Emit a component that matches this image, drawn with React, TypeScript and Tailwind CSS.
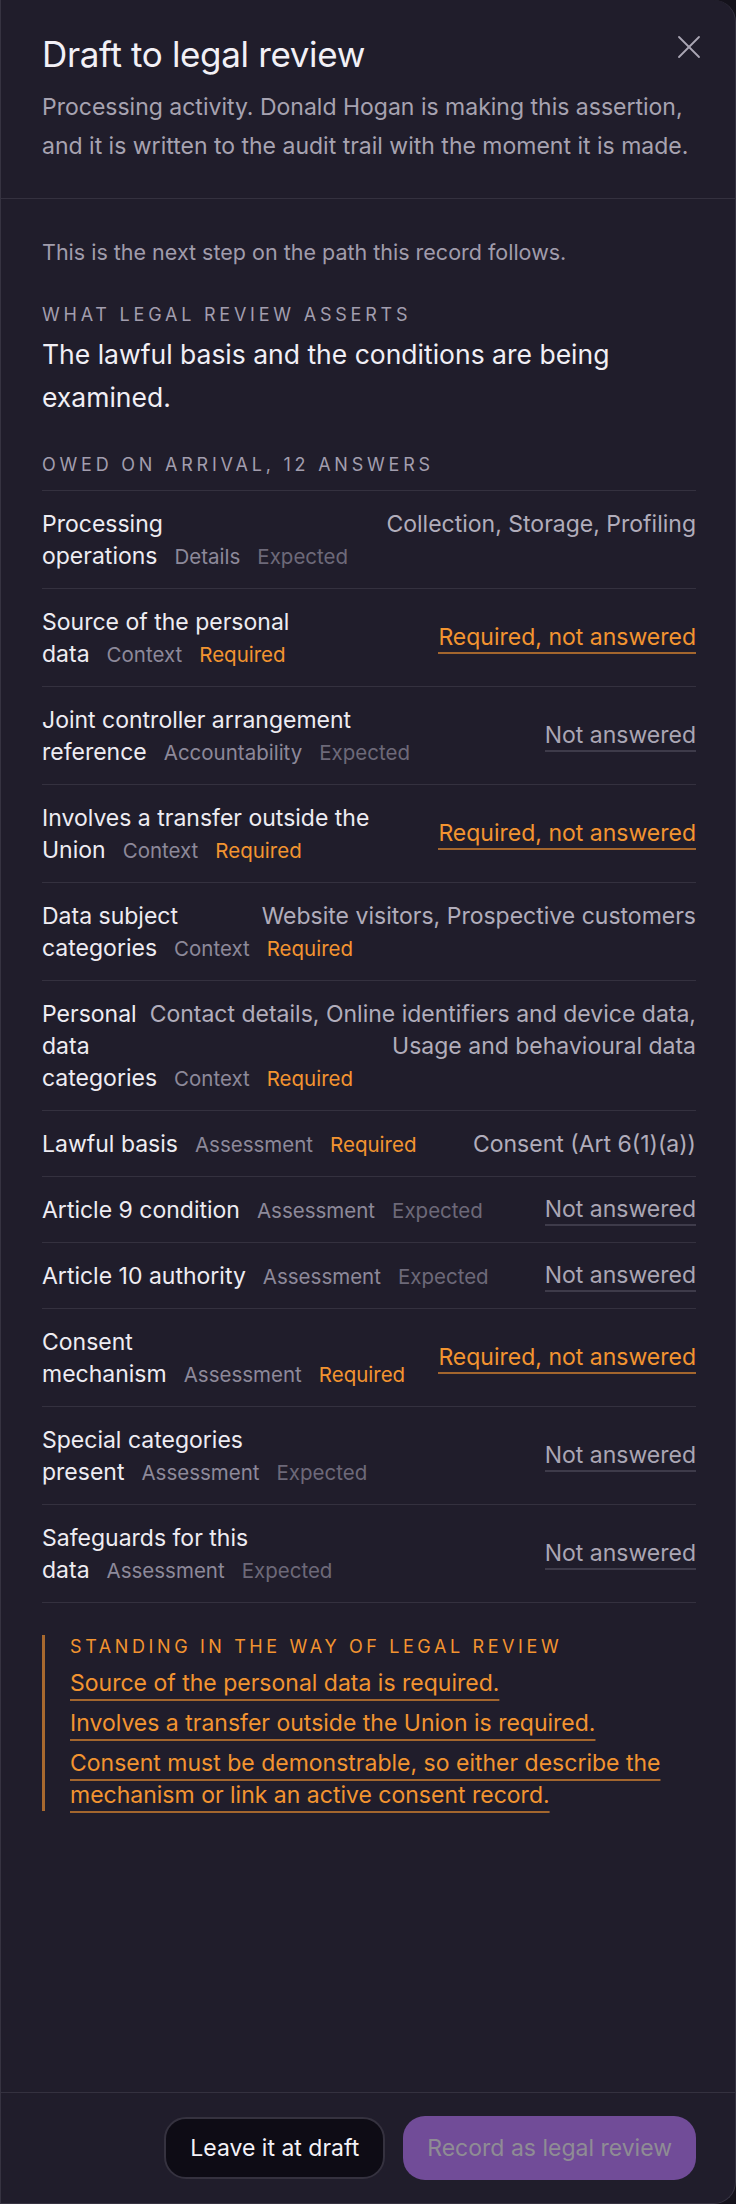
import { X } from "lucide-react";

type Row = {
  label: string;
  area: string;
  need: "Required" | "Expected";
  value?: string;
  missing?: boolean;
};

const rows: Row[] = [
  { label: "Processing operations", area: "Details", need: "Expected", value: "Collection, Storage, Profiling" },
  { label: "Source of the personal data", area: "Context", need: "Required", missing: true },
  { label: "Joint controller arrangement reference", area: "Accountability", need: "Expected" },
  { label: "Involves a transfer outside the Union", area: "Context", need: "Required", missing: true },
  { label: "Data subject categories", area: "Context", need: "Required", value: "Website visitors, Prospective customers" },
  {
    label: "Personal data categories",
    area: "Context",
    need: "Required",
    value: "Contact details, Online identifiers and device data, Usage and behavioural data",
  },
  { label: "Lawful basis", area: "Assessment", need: "Required", value: "Consent (Art 6(1)(a))" },
  { label: "Article 9 condition", area: "Assessment", need: "Expected" },
  { label: "Article 10 authority", area: "Assessment", need: "Expected" },
  { label: "Consent mechanism", area: "Assessment", need: "Required", missing: true },
  { label: "Special categories present", area: "Assessment", need: "Expected" },
  { label: "Safeguards for this data", area: "Assessment", need: "Expected" },
];

const blockers = [
  "Source of the personal data is required.",
  "Involves a transfer outside the Union is required.",
  "Consent must be demonstrable, so either describe the mechanism or link an active consent record.",
];

function Value({ row }: { row: Row }) {
  if (row.value) {
    return <div className="max-w-[562px] text-right text-[23px] leading-[32px] text-[#b1adbb]">{row.value}</div>;
  }
  if (row.missing) {
    return (
      <button className="self-center shrink-0 border-b-2 border-[#a3662e] text-[23px] leading-[29px] text-[#f39430]">
        Required, not answered
      </button>
    );
  }
  return (
    <button className="self-center shrink-0 border-b-2 border-[#3e3b4a] text-[23px] leading-[29px] text-[#aaa6b4]">
      Not answered
    </button>
  );
}

export default function App() {
  return (
    <div className="min-h-screen bg-[#14121b]" style={{ fontFamily: "Inter, 'Noto Sans', sans-serif" }}>
      <div className="flex h-[2204px] w-[736px] flex-col overflow-hidden rounded-r-[22px] border border-t-0 border-[#363341] bg-[#201d2b]">
        {/* Header */}
        <div className="border-b border-[#34313f] pl-[41px] pr-[39px] pt-[34px] pb-[32px]">
          <div className="flex items-start justify-between">
            <h2 className="text-[35px] leading-[40px] tracking-[-0.01em] text-[#f2f0f6]">Draft to legal review</h2>
            <button className="-mt-[7px] -mr-[13px] text-[#aaa6b4]">
              <X className="h-[40px] w-[40px]" strokeWidth={1.1} />
            </button>
          </div>
          <p className="mt-[14px] text-[23px] leading-[39px] text-[#a7a3b1]">
            Processing activity. Donald Hogan is making this assertion, and it is written to the audit trail with the
            moment it is made.
          </p>
        </div>

        {/* Body */}
        <div className="flex-1 pl-[41px] pr-[39px] pt-[37px]">
          <p className="text-[21.5px] leading-[32px] text-[#a09cab]">This is the next step on the path this record follows.</p>

          <div className="mt-[35px] text-[18px] leading-[24px] tracking-[0.21em] text-[#a29eae]">WHAT LEGAL REVIEW ASSERTS</div>
          <p className="mt-[6px] text-[26.5px] leading-[43px] text-[#f1eff5]">
            The lawful basis and the conditions are being examined.
          </p>

          <div className="mt-[34px] text-[18px] leading-[24px] tracking-[0.21em] text-[#a29eae]">OWED ON ARRIVAL, 12 ANSWERS</div>

          <div className="mt-[13px] border-b border-[#34313f]">
            {rows.map((row) => (
              <div key={row.label} className="flex items-start gap-4 border-t border-[#34313f] pt-[17px] pb-[16px]">
                <div className="min-w-0 flex-1 text-[23px] leading-[32px] text-[#eeecf2]">
                  <span>{row.label}</span>
                  <span className="ml-[17px] text-[20.5px] leading-[20px] text-[#8d899a]">{row.area}</span>
                  <span
                    className={`ml-[17px] text-[20.5px] leading-[20px] ${
                      row.need === "Required" ? "text-[#f39430]" : "text-[#6d6979]"
                    }`}
                  >
                    {row.need}
                  </span>
                </div>
                <Value row={row} />
              </div>
            ))}
          </div>

          {/* Blockers */}
          <div className="mt-[32px] border-l-[3px] border-[#a8692f] pl-[25px]">
            <div className="text-[18px] leading-[24px] tracking-[0.2em] text-[#f39430]">STANDING IN THE WAY OF LEGAL REVIEW</div>
            <div className="mt-[8px] flex flex-col gap-[8px]">
              {blockers.map((b) => (
                <div key={b} className="text-[23px] leading-[32px] text-[#f39430]">
                  <a className="underline decoration-[#a3662e] decoration-2 underline-offset-[8px]">{b}</a>
                </div>
              ))}
            </div>
          </div>
        </div>

        {/* Footer */}
        <div className="flex items-center justify-end gap-[18px] border-t border-[#34313f] pl-[41px] pr-[39px] py-[23px]">
          <button className="h-[62px] rounded-[22px] border-2 border-[#35323f] bg-[#0e0c15] px-[24px] text-[23px] text-[#f4f2f8]">
            Leave it at draft
          </button>
          <button className="h-[64px] rounded-[22px] bg-[#714c98] px-[24px] text-[23px] text-[#8f8c94]">
            Record as legal review
          </button>
        </div>
      </div>
    </div>
  );
}
